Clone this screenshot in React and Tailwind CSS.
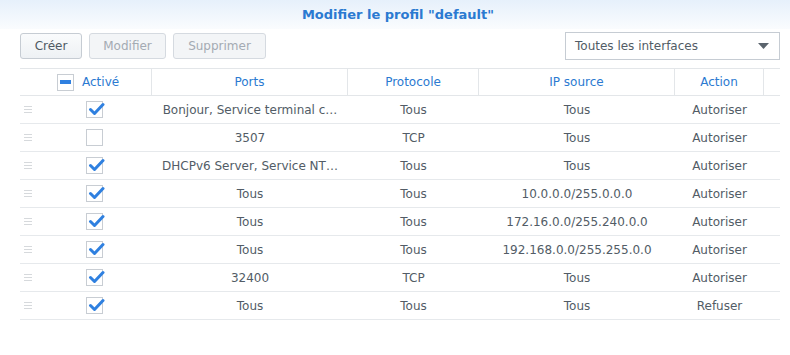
const ROWS = [
  { on: true, ports: 'Bonjour, Service terminal c…', proto: 'Tous', ip: 'Tous', action: 'Autoriser' },
  { on: false, ports: '3507', proto: 'TCP', ip: 'Tous', action: 'Autoriser' },
  { on: true, ports: 'DHCPv6 Server, Service NT…', proto: 'Tous', ip: 'Tous', action: 'Autoriser' },
  { on: true, ports: 'Tous', proto: 'Tous', ip: '10.0.0.0/255.0.0.0', action: 'Autoriser' },
  { on: true, ports: 'Tous', proto: 'Tous', ip: '172.16.0.0/255.240.0.0', action: 'Autoriser' },
  { on: true, ports: 'Tous', proto: 'Tous', ip: '192.168.0.0/255.255.0.0', action: 'Autoriser' },
  { on: true, ports: '32400', proto: 'TCP', ip: 'Tous', action: 'Autoriser' },
  { on: true, ports: 'Tous', proto: 'Tous', ip: 'Tous', action: 'Refuser' },
]

function Check({ on }) {
  return (
    <div className="w-[17px] h-[17px] border border-[#c8cdd3] bg-white relative">
      {on && (
        <svg className="absolute -top-[1px] left-[1px]" width="17" height="16" viewBox="0 0 17 16">
          <path d="M2.5 8.5 L6.5 12.5 L15 3.5" fill="none" stroke="#2f80e0" strokeWidth="3" strokeLinecap="round" strokeLinejoin="round" />
        </svg>
      )}
    </div>
  )
}

function Handle() {
  return (
    <div className="flex flex-col gap-[2px] w-[8px]">
      <div className="h-px bg-[#d6d9dc]" />
      <div className="h-px bg-[#d6d9dc]" />
      <div className="h-px bg-[#d6d9dc]" />
    </div>
  )
}

export default function App() {
  return (
    <div className="w-[790px] h-[355px] bg-white text-[12px] text-[#525c66] font-['DejaVu_Sans','Liberation_Sans',sans-serif] overflow-hidden">
      {/* Title */}
      <div className="h-[29px] bg-gradient-to-b from-[#e6f0fb] to-[#fafcfe] flex items-center justify-center pl-[6px]">
        <span className="text-[13px] font-bold text-[#2b7ad1]">Modifier le profil "default"</span>
      </div>

      {/* Toolbar */}
      <div className="flex items-center px-[20px] mt-[3px] h-[28px]">
        <button className="h-[26px] w-[62px] border border-[#c6ccd3] rounded-[3px] bg-gradient-to-b from-[#fafbfc] to-[#eef1f4] text-[#505a64]">Créer</button>
        <button className="ml-[7px] h-[26px] w-[77px] border border-[#d5dae0] rounded-[3px] bg-[#f3f5f7] text-[#a4abb3]">Modifier</button>
        <button className="ml-[7px] h-[26px] w-[93px] border border-[#d5dae0] rounded-[3px] bg-[#f3f5f7] text-[#a4abb3]">Supprimer</button>
        <div className="ml-auto mr-[-10px] h-[28px] w-[215px] border border-[#c6ccd3] bg-white flex items-center justify-between pl-[9px] pr-[10px]">
          <span>Toutes les interfaces</span>
          <svg width="11" height="6" viewBox="0 0 11 6"><path d="M0 0 H11 L5.5 6 Z" fill="#5b646d" /></svg>
        </div>
      </div>

      {/* Table */}
      <div className="ml-[20px] mr-[10px] mt-[8px]">
        <div className="flex h-[28px] border-t border-b border-[#e3e6e9] text-[#2b7ad1]">
          <div className="w-[132px] flex items-center pl-[37px] gap-[8px] border-r border-[#e3e6e9]">
            <div className="w-[17px] h-[17px] border border-[#c8cdd3] bg-white flex items-center justify-center">
              <div className="w-[11px] h-[4px] bg-[#2f80e0]" />
            </div>
            <span>Activé</span>
          </div>
          <div className="w-[196px] flex items-center justify-center border-r border-[#e3e6e9]">Ports</div>
          <div className="w-[131px] flex items-center justify-center border-r border-[#e3e6e9]">Protocole</div>
          <div className="w-[196px] flex items-center justify-center border-r border-[#e3e6e9]">IP source</div>
          <div className="w-[89px] flex items-center justify-center border-r border-[#e3e6e9]">Action</div>
          <div className="flex-1" />
        </div>
        {ROWS.map((r, i) => (
          <div key={i} className="flex h-[28px] border-b border-[#e6e9ec] items-center">
            <div className="w-[132px] flex items-center pl-[4px]">
              <Handle />
              <div className="ml-[54px]"><Check on={r.on} /></div>
            </div>
            <div className="w-[196px] text-center">{r.ports}</div>
            <div className="w-[131px] text-center">{r.proto}</div>
            <div className="w-[196px] text-center">{r.ip}</div>
            <div className="w-[89px] text-center">{r.action}</div>
          </div>
        ))}
      </div>
    </div>
  )
}
